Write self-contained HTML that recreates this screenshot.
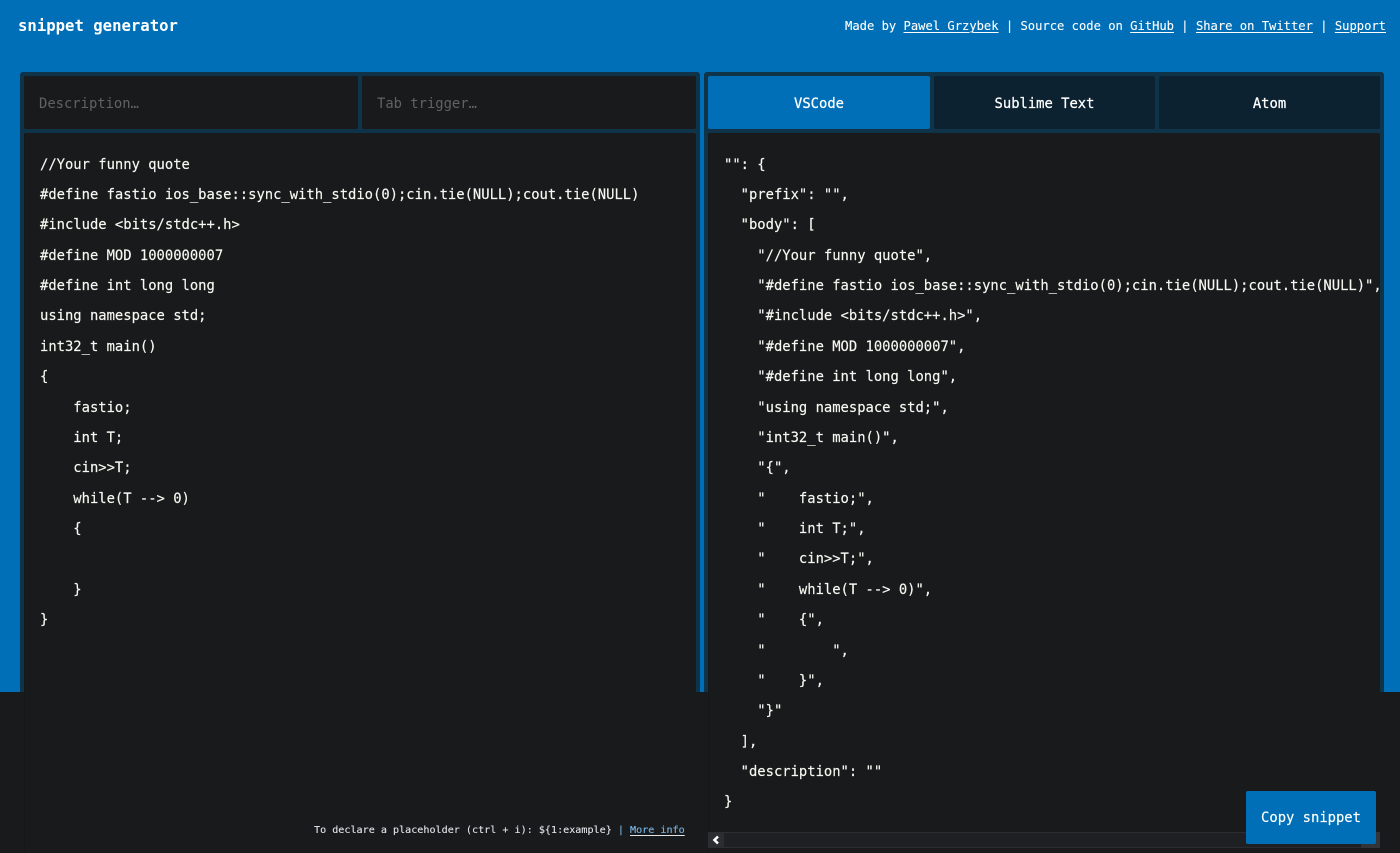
<!DOCTYPE html>
<html lang="en">
<head>
<meta charset="utf-8">
<title>snippet generator</title>
<style>
html,body{margin:0;padding:0;width:1400px;height:853px;overflow:hidden;background:#191a1c;}
body{position:relative;font-family:"DejaVu Sans Mono","Liberation Mono",monospace;color:#fff;}
.abs{position:absolute;box-sizing:border-box;}
.blue{left:0;top:0;width:1400px;height:692px;background:#006fb7;}
.panel{top:72px;height:620px;background:#0f3349;border-radius:3px 3px 0 0;}
.box{background:#191a1c;border-radius:2px;}
.ph{font-size:13.84px;line-height:56px;height:53px;overflow:hidden;color:#626262;padding-left:15px;white-space:pre;}
.tab{top:76px;height:53px;background:#0d2231;border-radius:2px;text-align:center;font-size:13.84px;line-height:56px;overflow:hidden;color:#fff;-webkit-text-stroke:.25px #fff;}
.code{font-size:13.84px;line-height:30.38px;white-space:pre;color:#f8f8f2;margin:0;font-family:inherit;-webkit-text-stroke:.15px #f8f8f2;}
a{color:inherit;text-decoration:underline;text-underline-offset:2px;text-decoration-thickness:1px;}
.head{top:17px;right:14px;font-size:12.15px;line-height:18px;white-space:pre;color:#fff;-webkit-text-stroke:.1px #fff;}
.title{left:18px;top:16px;font-size:15.63px;line-height:20px;font-weight:bold;color:#fff;white-space:pre;}
.hint{left:314px;top:824px;font-size:10.1px;line-height:14px;white-space:pre;color:#e2e6ea;-webkit-text-stroke:.1px #e2e6ea;}
.hint a{color:#5aa9e6;}
.copy{left:1246px;top:791px;width:130px;height:53px;background:#006fb7;border-radius:2px;text-align:center;line-height:55px;font-size:13.84px;color:#fff;-webkit-text-stroke:.15px #fff;}
</style>
</head>
<body>
<div class="abs blue"></div>
<div class="abs title">snippet generator</div>
<div class="abs head">Made by <a href="#">Pawel Grzybek</a> | Source code on <a href="#">GitHub</a> | <a href="#">Share on Twitter</a> | <a href="#">Support</a></div>

<div class="abs panel" style="left:20px;width:680px;"></div>
<div class="abs panel" style="left:704px;width:680px;"></div>

<div class="abs box ph" style="left:24px;top:76px;width:334px;">Description…</div>
<div class="abs box ph" style="left:362px;top:76px;width:334px;">Tab trigger…</div>

<div class="abs tab" style="left:708px;width:222px;background:#006fb7;">VSCode</div>
<div class="abs tab" style="left:934px;width:221px;">Sublime Text</div>
<div class="abs tab" style="left:1159px;width:221px;">Atom</div>

<div class="abs box" style="left:24px;top:133px;width:672px;height:720px;border-left:1px solid #151618;"></div>
<div class="abs box" style="left:708px;top:133px;width:672px;height:720px;border-left:1px solid #151618;"></div>

<pre class="abs code" style="left:40px;top:149.6px;">//Your funny quote
#define fastio ios_base::sync_with_stdio(0);cin.tie(NULL);cout.tie(NULL)
#include &lt;bits/stdc++.h&gt;
#define MOD 1000000007
#define int long long
using namespace std;
int32_t main()
{
    fastio;
    int T;
    cin&gt;&gt;T;
    while(T --&gt; 0)
    {
        
    }
}</pre>

<div class="abs" style="left:708px;top:133px;width:672px;height:699px;overflow:hidden;">
<pre class="abs code" style="left:16px;top:16.6px;">"": {
  "prefix": "",
  "body": [
    "//Your funny quote",
    "#define fastio ios_base::sync_with_stdio(0);cin.tie(NULL);cout.tie(NULL)",
    "#include &lt;bits/stdc++.h&gt;",
    "#define MOD 1000000007",
    "#define int long long",
    "using namespace std;",
    "int32_t main()",
    "{",
    "    fastio;",
    "    int T;",
    "    cin&gt;&gt;T;",
    "    while(T --&gt; 0)",
    "    {",
    "        ",
    "    }",
    "}"
  ],
  "description": ""
}</pre>
</div>

<div class="abs" style="left:708px;top:832px;width:672px;height:16px;background:#1f2023;border-top:1px solid #2c2d30;border-bottom:1px solid #2c2d30;"></div>
<div class="abs" style="left:708px;top:832px;width:16px;height:16px;background:#2c2d30;"></div>
<svg class="abs" style="left:708px;top:832px;" width="16" height="16" viewBox="0 0 16 16"><path d="M10 4.5 L6.5 8 L10 11.5" fill="none" stroke="#ffffff" stroke-width="2.6"/></svg>
<div class="abs" style="left:1361px;top:832px;width:19px;height:16px;background:#333437;"></div>

<div class="abs hint">To declare a placeholder (ctrl + i): ${1:example} <span style="color:#5aa9e6">|</span> <a href="#">More info</a></div>
<div class="abs copy">Copy snippet</div>
</body>
</html>
